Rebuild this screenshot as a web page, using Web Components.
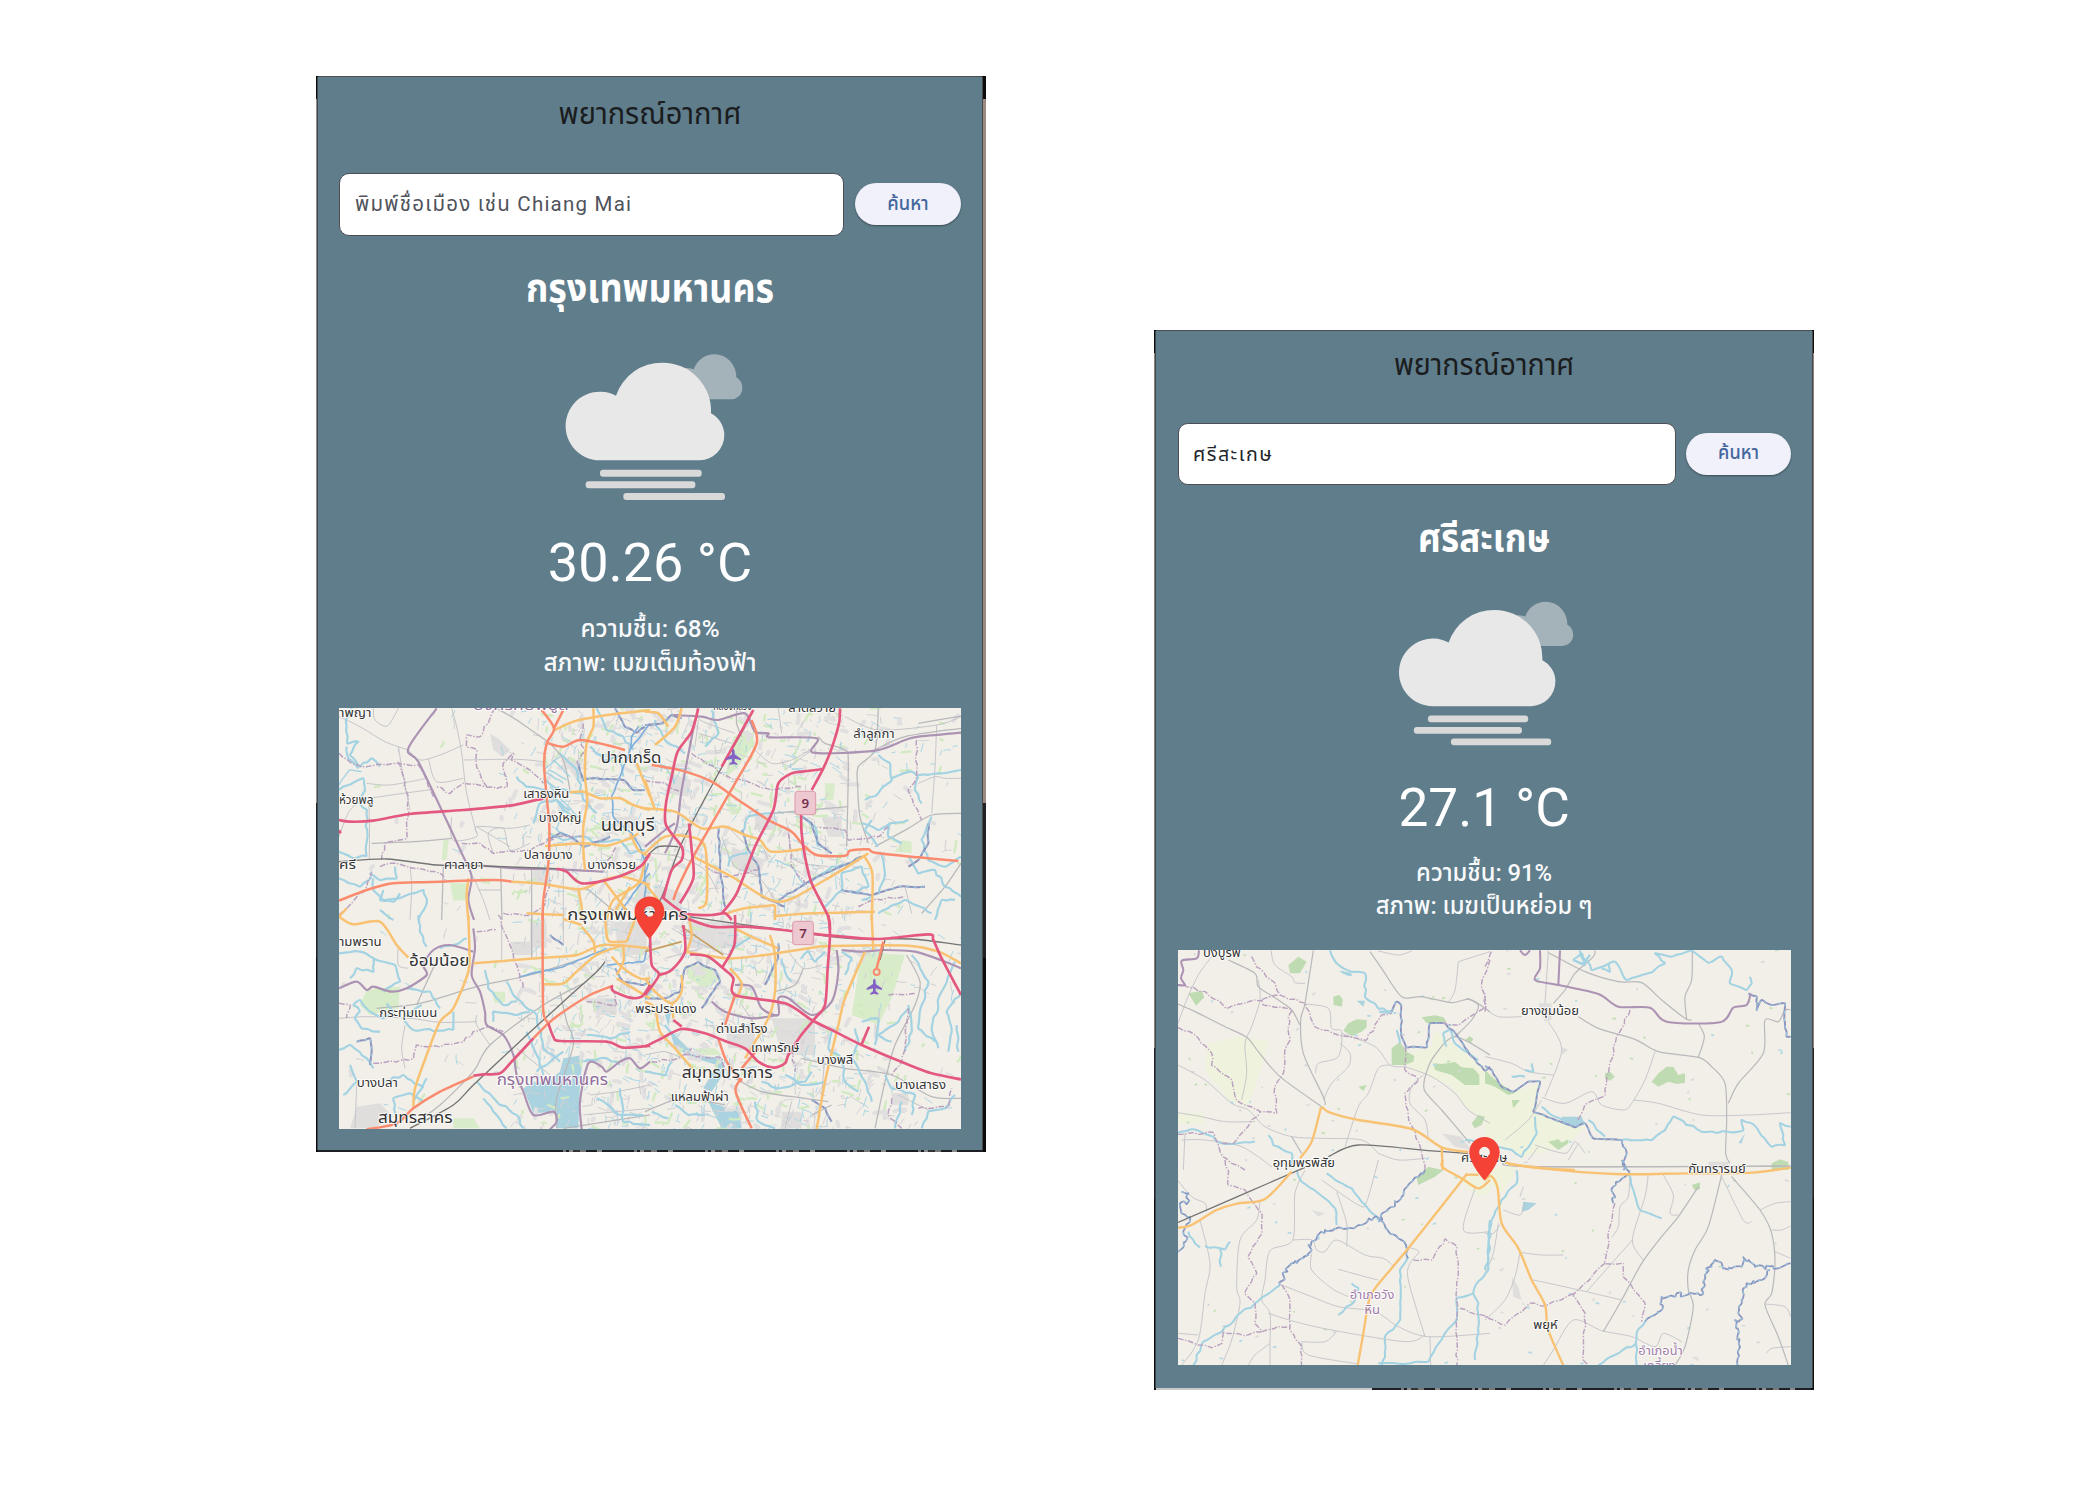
<!DOCTYPE html>
<html lang="th">
<head>
<meta charset="utf-8">
<title>พยากรณ์อากาศ</title>
<style>
body{margin:0;width:2100px;height:1500px;background:#fff;overflow:hidden;font-family:Roboto,"Noto Sans Thai","Noto Sans",sans-serif}
</style>
</head>
<body>
<weather-board>
  <weather-phone style="--u:1;--x:316px;--y:76px;--top:96.5px;--title:21px;--edge:#9a8a81;--brk:67.6%;--h:1076px;--w:670px;--pl:21.5px;--pr:4px;--cut:#1d1f24" heading="พยากรณ์อากาศ">
    <search-row slot="search" hint value="พิมพ์ชื่อเมือง เช่น Chiang Mai" action="ค้นหา" w="276"></search-row>
    <weather-report slot="report" city="กรุงเทพมหานคร" cityw="248" temp="30.26 °C" humidity="ความชื้น: 68%" humw="139" sky="สภาพ: เมฆเต็มท้องฟ้า" skyw="213" bars="0" clouds="0"></weather-report>
    <city-map slot="map" place="bangkok"></city-map>
  </weather-phone>
  <weather-phone style="--u:.9855;--x:1154px;--y:330px;--top:93px;--title:17.5px;--edge:#8d8078;--brk:67.7%;--h:1060px;--w:660px;--pl:22.5px;--pr:2.5px;--cut:#c9c9cc" heading="พยากรณ์อากาศ">
    <search-row slot="search" value="ศรีสะเกษ" action="ค้นหา" w="80"></search-row>
    <weather-report slot="report" city="ศรีสะเกษ" cityw="134" temp="27.1 °C" humidity="ความชื้น: 91%" humw="138" sky="สภาพ: เมฆเป็นหย่อม ๆ" skyw="220" bars="-20" clouds="-5"></weather-report>
    <city-map slot="map" place="sisaket"></city-map>
  </weather-phone>
</weather-board>
<script>
const line = (cls, h, text, size, w, extra='') =>
  `<svg class="${cls}" height="${h}" viewBox="0 0 400 ${h}"><text x="200" y="${h/2+size*.3415}" text-anchor="middle" font-size="${size}" ${w?`textLength="${w}" lengthAdjust="spacingAndGlyphs"`:''} ${extra}>${text}</text></svg>`;

customElements.define('weather-board', class extends HTMLElement{
  constructor(){super();this.attachShadow({mode:'open'}).innerHTML=`<style>:host{display:block;position:relative;width:2100px;height:1500px}</style><slot></slot>`}
});

customElements.define('weather-phone', class extends HTMLElement{
  connectedCallback(){
    this.attachShadow({mode:'open'}).innerHTML=`<style>
    :host{position:absolute;left:var(--x);top:var(--y);width:var(--w);height:var(--h);display:flex;box-sizing:border-box;padding:1px var(--pr) 2px 1.5px;
      background:linear-gradient(#0c0c0e 0 23px,var(--edge) 23px var(--brk),#202226 var(--brk) 82%,#0b0b0d 82%)}
    main{flex:1;background:#607d8b;display:flex;flex-direction:column;box-sizing:border-box;padding:0 calc(21px*var(--u)) 0 calc(var(--pl)*var(--u));box-shadow:-1px 0 #3c4a52, 0 -1px #4b4f50, 1px 0 #4a4a4a}
    header{height:calc(var(--top) - 1px);box-sizing:border-box;padding-top:var(--title);display:flex;justify-content:center}
    header svg{height:calc(32px*var(--u))}
    text{fill:#1a1c1e}
    .cut{position:absolute;left:2px;right:3px;bottom:0;height:2px;background:linear-gradient(90deg,var(--cut) 0 33%,transparent 33%),repeating-linear-gradient(90deg,#1d1f24 0 32px,#77787c 32px 35px,#1d1f24 35px 38px,#8a8a8e 38px 42px,#333 42px 49px,#777 49px 55px,#1d1f24 55px 66px,#888 66px 71px)}
    </style><main><header>${line('t',32,this.getAttribute('heading'),30,183)}</header><slot name="search"></slot><slot name="report"></slot><slot name="map"></slot></main><div class="cut"></div>`;
  }
});

customElements.define('search-row', class extends HTMLElement{
  connectedCallback(){
    const hint=this.hasAttribute('hint');
    this.attachShadow({mode:'open'}).innerHTML=`<style>
    :host{display:flex;align-items:center;gap:calc(11px*var(--u));height:calc(63px*var(--u));flex:none}
    .field{flex:1;height:100%;box-sizing:border-box;background:#fff;border:1.5px solid #4c4d55;border-radius:calc(10px*var(--u));display:flex;align-items:center;padding-left:calc(15px*var(--u))}
    .btn{width:calc(106px*var(--u));height:calc(42.5px*var(--u));border-radius:30px;background:#f1f1fb;box-shadow:0 1px 2px #0006;display:flex;align-items:center;justify-content:center}
    svg{display:block;overflow:visible;height:calc(30px*var(--u))}
    .field text{fill:${hint?'#50535b':'#222428'}} .btn text{fill:#43679c;font-weight:500}
    </style><div class="field"><svg viewBox="0 0 300 30"><text x="0" y="22" font-size="${hint?20.5:20}" textLength="${this.getAttribute('w')}" lengthAdjust="spacing">${this.getAttribute('value')}</text></svg></div>
    <div class="btn"><svg viewBox="0 0 60 30"><text x="30" y="20.5" text-anchor="middle" font-size="19.4" textLength="41.5" lengthAdjust="spacingAndGlyphs">${this.getAttribute('action')}</text></svg></div>`;
  }
});

customElements.define('weather-report', class extends HTMLElement{
  connectedCallback(){
    const a=n=>this.getAttribute(n);
    this.attachShadow({mode:'open'}).innerHTML=`<style>
    :host{display:flex;flex-direction:column;align-items:center;flex:none;padding:calc(28.5px*var(--u)) 0 calc(28px*var(--u))}
    svg{display:block;flex:none;overflow:visible;width:calc(400px*var(--u))}
    text{fill:#fff}
    .city{height:calc(50px*var(--u));font-weight:700}.temp{height:calc(64px*var(--u));margin-bottom:calc(17px*var(--u))}
    .info{height:calc(34px*var(--u));font-weight:500}.info text{fill:#f8fafc}
    .sky{height:calc(216.5px*var(--u));width:calc(300px*var(--u))}
    </style>
    ${line('city',50,a('city'),39.5,a('cityw'))}
    <svg class="sky" viewBox="-1 -17 900 649.5">
      <g transform="translate(${a('clouds')})">
      <path fill="#a4b2b9" d="M510 239H690A34 34 0 0 0 726 205A38 38 0 0 0 708 173A65 68 0 0 0 643 104A66 66 0 0 0 580 149Q555 140 530 150Z"/>
      <path fill="#e8e8e8" d="M299 422A103 103 0 1 1 347 228A145 145 0 0 1 487 129A145 145 0 0 1 632 281A76 76 0 0 1 672 346A76 76 0 0 1 598 422Z"/></g>
      <g transform="translate(${a('bars')})" fill="#d9d9da"><rect x="299" y="450" width="305" height="21" rx="9"/><rect x="256" y="485" width="329" height="21" rx="9"/><rect x="369" y="520" width="305" height="21" rx="9"/></g>
    </svg>
    ${line('temp',64,a('temp'),54,0)}
    ${line('info',34,a('humidity'),24.3,a('humw'))}
    ${line('info',34,a('sky'),24.3,a('skyw'))}`;
  }
});

/* Kinds of map line: colour, width, dash, wiggle amplitude */
const KIND={
  M:['#e4587f',8],T:['#fa8b6e',7.5],P:['#f8c272',7.5],S:['#b9b9bb',3.8],G:['#c2c2c6',2.8],R:['#747474',4],
  B:['#ac93b3',6.5],D:['#b9a1bf',4.5,'17 5 4 5',2.5],W:['#a3d3e2',6.5,'',2.5],w:['#a3d3e2',4,'',1.5],V:['#8794bf',5.5,'',5],X:['#8b93bd',6,'',1.5],U:['#7fb0dc',5,'',1.5],Y:['#c79f62',5]
};
function rng(s){return()=>{s=(s*1664525+1013904223)>>>0;return s/4294967296}}
function trace(pts,amp,rnd){
  let p=pts.trim().split(/\s+/).map(q=>q.split(',').map(Number));
  if(amp){const o=[p[0]];for(let i=1;i<p.length;i++){const[a,b]=p[i-1],[c,d]=p[i],l=Math.hypot(c-a,d-b),n=Math.max(1,Math.round(l/(amp>4?9:16)));
    for(let k=1;k<=n;k++){const t=k/n,z=k===n?0:1;o.push([a+(c-a)*t+z*(rnd()-.5)*amp*2.6,b+(d-b)*t+z*(rnd()-.5)*amp*2.6])}}p=o}
  let d=`M${p[0]}`;
  for(let i=0;i<p.length-1;i++){const a=p[i-1]||p[i],b=p[i],c=p[i+1],e=p[i+2]||c,k=7;
    d+=`C${[b[0]+(c[0]-a[0])/k,b[1]+(c[1]-a[1])/k,c[0]-(e[0]-b[0])/k,c[1]-(e[1]-b[1])/k,c[0],c[1]].map(v=>v.toFixed(1))}`}
  return d;
}
const LAYERS={
bangkok:{off:[[-9,-8],[306,-8],[-9,207],[306,207]],size:[622,421],scatter:1,
lines:[`
G 27,50 90,80 165,125 235,150
G 130,25 135,60 172,78 205,25
G 365,25 380,80 395,160 410,280 440,400
G 205,140 220,230 240,330
G 235,150 270,180 330,165 400,135
G 295,175 320,245 400,235
G 118,475 118,350 110,300 60,330 27,410
G 110,250 180,255 290,235
G 115,295 220,280 310,268
G 400,180 560,178 640,185
S 125,430 250,425 365,415
G 365,350 368,420 440,410 440,380 540,385 600,375
G 440,380 540,440
G 490,460 475,400 520,385 540,450 600,430
S 500,25 560,60 660,130
S 660,130 700,180 720,270
S 512,500 516,660
G 445,570 512,570
S 340,500 335,660
G 240,500 245,560 240,660
S 605,505 605,660
G 430,530 460,600 480,660
G 700,500 700,660
W 65,25 48,60 52,130 85,125 60,165 90,200 125,175 150,200
W 85,205 55,175 50,140
w 27,255 60,210 95,215
W 27,270 100,235 105,270 90,310 110,330 110,470
W 27,455 70,475 110,468
W 118,520 150,540 200,535 195,500
W 130,535 130,570 160,600 220,590 280,570 290,610 265,660
W 160,570 150,600 190,605 210,580
W 27,535 90,560 125,530
W 150,630 190,660
W 560,230 590,260 660,275 700,330 740,360
W 640,235 670,260 720,275 760,280
W 660,400 700,420 760,410 800,430
W 610,370 630,310 680,300 720,330
W 690,160 740,210 760,300 800,340
W 800,25 830,90 880,110 910,150
W 780,140 820,180 870,170 880,230
w 690,170 640,210 700,250
w 660,260 760,370
w 700,320 680,390 740,420
w 670,180 720,230
w 655,210 710,240
W 790,430 870,420 900,460 945,450
X 855,25 885,80 920,98 945,80
X 745,190 760,240 800,235 880,240 910,270 945,270
X 650,420 690,400 720,410 760,440 840,410
U 960,70 900,150 870,230 845,290 850,350 870,370 905,400 930,440 945,490 945,660
U 900,150 905,110 925,80
U 860,650 910,580 960,520
D 495,25 450,110 410,105 410,140 440,150 440,200 470,260 400,250 360,280 320,260
D 470,262 530,262 520,190 550,160 545,180 610,220 640,250
D 27,160 65,190 110,200 200,190 265,195 290,240 310,290
D 205,185 235,290 230,415 165,430 155,480
D 150,500 200,490 250,505 330,520 345,540
D 27,645 110,560 125,515
D 395,430 450,430 490,460 600,450 680,410 760,410
D 760,70 750,120 765,150 740,190
D 520,640 600,645 640,620 660,540
D 820,510 860,440
B 320,25 235,145 265,185 335,330 400,470 425,530 415,600 432,660
B 455,497 560,505 690,508 820,515
P 670,92 730,65 790,52 870,40 960,30
P 790,25 790,80 770,130 765,230 772,300 760,380 760,450 765,510
P 720,277 760,275 810,295 870,295 910,315 960,330
P 920,190 960,290
P 645,438 760,430 830,437 900,415 925,400
P 900,400 925,450 960,470
P 545,545 640,552 750,568 820,540 880,530 960,555
P 415,535 410,590 415,660
P 745,568 755,620 755,660
P 820,540 880,620 900,660
P 945,480 925,550 850,600 830,660
P 590,640 700,645
P 27,650 50,625
P 845,650 900,560
Y 820,540 890,630
R 27,485 170,477 320,495 460,498 680,506
S 770,565 860,640
T 27,602 110,570 190,550 300,546 490,540 545,545
T 635,30 672,85 650,130 642,190 650,290 658,380 655,490 640,600 638,660
T 672,85 700,30
T 655,130 700,140 750,120 830,135 885,150
M 27,360 60,365 130,362 240,342 400,330 540,317 610,302 640,296
M 680,506 710,515 755,550 850,535 930,500 960,460
M 27,390 32,400`,
`G 155,25 165,60 270,100
G 160,60 150,140
S 275,25 275,70 290,110
G 160,100 260,130
G 330,150 380,190 440,180 510,140
G 420,210 500,150
G 400,25 410,100
S 520,110 540,130 600,150 610,190 605,440
S 700,25 690,150 640,200 638,260 645,350 670,430
G 600,50 700,90 875,75 948,50
S 690,150 780,110 948,85
S 820,70 948,48
G 875,75 870,200 860,340
S 690,440 790,385 860,345 948,340
S 948,490 900,560 830,640
G 948,235 900,235 870,230 820,250
S 380,340 610,320
G 250,380 300,430 350,440 370,480
G 230,410 270,500 340,530 390,600
G 20,460 100,470 180,510 220,580
G 430,380 450,480 550,500
G 780,560 800,640 
W 700,165 735,190 740,240 700,280 660,300
W 740,235 800,215 820,230
W 820,230 810,270 830,310
W 650,370 700,390 735,370 790,360
W 735,370 730,410 770,430
W 680,360 660,390 700,440
W 860,350 830,420 850,480 900,500 948,470
W 790,470 820,520 870,510 900,560 948,590
W 710,460 720,520 700,580 650,600
W 540,620 590,570 590,520 650,500 670,560 620,580
W 490,550 560,500 620,490 650,470
W 470,350 510,380 520,440
W 820,225 880,220 948,210
W 870,660 890,600 930,600
W 700,640 780,600 860,640
W 30,60 60,120 120,160
W 200,30 220,100 180,140
W 250,500 260,470 310,460
W 290,400 310,350 380,340
w 20,180 60,200 90,250
w 390,480 440,500 480,560
X 0,75 50,70 80,45 110,55
X 470,350 500,370 520,430 560,460
X 850,370 850,430 820,480 790,500
X 590,570 680,585 760,560 840,560
X 220,380 225,500 240,620
X 290,390 310,450 340,500 350,590 420,620
D 140,160 250,230 320,250 380,270 470,260
D 815,120 815,230 790,270 830,360
D 730,380 700,410 610,420 600,390 520,380
D 0,240 60,250 110,280
D 640,620 680,600 780,590
D 430,400 440,500 490,560
D 180,500 240,530 340,510
B 85,45 170,50 220,60 300,40 330,95 370,100 375,112 515,115 505,158 690,152 780,120 820,110 948,98
B 150,60 110,270 95,380 60,460
B 0,440 60,390 90,370
P 110,25 90,80 30,135
P 0,35 40,40 70,80
P 0,325 90,335 170,385 240,380 300,405 345,420 380,455 490,445
P 0,460 60,410 130,410 180,440 185,600 160,625
P 145,470 260,530 400,605 540,540 670,460
P 655,465 682,520 680,660
P 245,640 300,625 390,615
P 390,615 390,660
P 390,648 500,640 690,635
P 0,240 30,330
P 0,550 40,600
X 400,600 500,540 650,470
U 0,520 10,490
T 20,195 110,212 200,245 280,300 370,360 440,395 470,430 515,465 600,467 615,452 670,448 690,458 820,472 940,483
T 320,60 335,130 270,250 150,460 100,560 85,600
M 160,25 140,95 98,155 80,230 63,310 63,375 110,440 110,480 80,510 55,595
R 300,80 215,230 110,430 55,580 40,610
M 325,30 230,200
R 0,475 40,440 100,440
M 132,370 140,450 145,535 105,610
M 585,25 582,70 560,145 535,205 500,270
M 535,207 470,215 440,220 400,250 385,330 330,440 275,580 230,640
M 468,340 470,400 480,470 500,550 550,650 555,690
M 50,590 120,640 200,645 240,640 260,660`,
`G 205,90 205,150 235,160
S 355,120 320,140 260,270
G 27,310 110,305 240,310 330,322 440,320
S 140,280 270,265 440,215 600,180 760,130
S 760,205 640,270 480,390 430,470 330,570 260,620
G 515,20 515,140
S 605,0 605,130
G 700,0 700,90
G 225,330 215,400 225,460
G 75,640 80,510
G 480,390 440,330 440,300
S 690,230 710,320 730,390 680,550 680,640
G 780,540 860,530 960,510
G 760,600 960,580
S 700,640 960,600
G 560,400 660,480
W 27,115 90,110 130,130 130,170 80,160 60,190
W 130,130 195,150 210,200 160,230
W 90,290 70,270 90,255 120,290 160,310 190,290 170,265
W 90,290 75,310 95,340 150,350
W 27,405 60,390 110,430 130,460
W 60,450 80,500 40,540
W 265,0 270,50 290,95
W 200,620 190,550 240,535 280,560
W 290,490 250,560
W 160,500 220,480 280,520
W 230,220 300,230 330,280
W 275,270 220,310 250,345 370,345
W 370,290 370,345
W 465,165 475,220 520,270 560,260
W 490,320 490,290 560,300 600,290
W 530,200 550,240 620,300 640,400 690,440
W 590,350 620,420 640,480
W 440,500 500,560 560,600 580,640
W 530,640 500,600 460,550
W 770,360 840,370 900,350
W 760,440 830,430 870,450
W 700,410 620,470
W 800,550 870,600 940,600
W 870,520 880,620 960,630
W 330,100 370,90 410,70
X 855,160 880,200 940,210 960,200
X 80,380 120,370 125,400 120,450
U 570,185 700,155 830,100
U 830,150 940,140 960,80
D 27,265 60,270 50,310
D 130,445 200,440 250,430 260,390 330,395 400,380 430,350 480,335 520,350
D 505,0 560,150 580,220
D 440,50 500,45
D 770,260 860,270 850,230
X 660,60 700,90
B 27,220 80,200 110,225 130,215 185,230 230,220 290,180 280,150 310,105 360,90 430,110
B 430,40 435,100 425,180 450,230 465,290 470,330 520,360 550,420 560,480 580,530 610,600 670,590 680,620 660,643
B 755,643 750,560 775,445 815,455 830,470 870,440 900,430 930,460 960,440
P 27,5 70,28 150,20 200,90 235,128
P 415,0 418,100 415,170 370,280 330,320 290,420 255,520 250,580
P 430,145 620,130 740,120 820,90 960,100
P 755,35 790,80 795,115
P 825,0 830,60 840,80 890,80
P 640,208 700,205 740,170 800,120 880,90
P 845,125 880,160 930,190 960,190
P 880,90 880,140 860,180
P 700,12 755,30
P 920,0 890,80
P 860,190 960,250
R 825,140 800,170 700,260 580,370 430,510 370,570 240,640
T 638,0 638,120 640,290 655,325
T 850,212 780,240 700,290 655,325 610,370
T 430,485 330,530 250,580 200,625 110,643
M 430,482 460,478 510,475 545,440 610,370
M 655,325 670,365 690,378 830,380 880,398 960,392
M 845,212 850,228 900,248 935,245 960,210`,
`G 80,40 150,80 250,120
G 60,130 170,100
G 430,110 475,160 530,150
S 475,160 450,210 390,230
S 470,430 600,460 740,480 860,545 948,550
S 785,120 825,200 810,270 750,390 720,500 690,640
G 290,270 330,330 350,380
S 270,490 350,530 480,550 550,560
S 560,570 500,600
G 760,540 860,590 
G 0,420 60,410 110,430
S 0,590 110,550 240,570
G 440,560 420,640
G 540,420 530,540
W 470,130 490,110 510,140 540,110
W 0,250 20,225
W 410,130 420,170 440,200
W 800,120 850,200 830,270 820,340 870,380
W 780,410 800,350 790,270
W 880,400 860,340 890,230 930,140
W 910,410 920,350 905,290 948,230
W 940,410 935,330
W 740,380 700,360 760,320 790,280
W 600,180 620,130 590,110
W 560,350 550,400 590,430 600,500 640,530
W 620,430 660,500 680,560
W 650,320 700,310 690,390
W 620,430 640,380 630,340
W 720,480 740,520 810,540 800,600
W 830,640 850,590 900,580 930,540
W 350,500 400,520 480,500 500,470
W 420,480 470,510 540,500
W 0,470 60,480 80,440
W 20,590 70,610
W 90,570 130,600 180,600
W 330,560 340,620 390,640
W 60,330 90,370
W 255,110 320,60
W 750,640 770,560
X 500,555 540,580 560,620
X 400,130 370,190 360,210
X 0,250 60,250 105,230 120,160 160,142 210,165 225,200 190,250 170,280
D 730,240 810,235
D 790,280 780,400 770,440 740,480
D 740,550 730,600 770,640
D 820,580 910,575 920,520
D 440,400 450,470
D 20,440 100,430 140,400 
D 120,420 230,430 240,470
B 575,105 580,170 560,260 500,300 430,250 400,250 400,300 350,280 320,215 270,210
B 200,260 240,290 320,310 400,300
B 590,105 650,110 720,105 810,110 900,140 948,160
X 400,85 400,130
P 0,190 30,230 80,265 110,230 110,180
P 130,0 140,60 125,110
P 270,40 330,70 400,100
P 120,110 250,130 360,120 500,98 560,93 790,92 880,110 948,145
P 375,60 390,120 390,230 370,310 300,430
P 255,160 290,205 275,250
P 680,0 685,105
P 660,110 600,250 580,330 540,500 515,643
P 0,260 30,280 45,350 90,400 150,470
P 80,265 85,310
Y 110,35 235,120
Y 0,110 110,80
T 270,240 240,330
T 220,370 245,440 290,500
T 290,460 340,400
T 290,490 272,530 320,640
M 0,395 50,370 110,342 180,355 240,378 300,400 340,440 385,458 420,445 430,420 465,365 510,310 540,270 548,160 555,60 550,0
M 15,60 20,150 42,180 0,240
M 42,180 80,165 120,110 115,30
M 135,118 190,125 240,165 265,190 270,240 420,265 500,315 570,350 650,390 780,445 860,475 948,493
M 270,0 268,90 230,160
M 100,0 200,35 300,35 440,48 560,62 700,72 850,58 865,75 890,130 948,240
M 650,388 672,335
M 85,315 110,335
R 130,5 290,28 420,45 520,60 640,72 800,72 948,90
R 720,75 705,135
T 715,80 695,160`],
water:['','','M580 520L610 500L650 500L690 470L700 430L760 420L750 500L745 640L680 640L680 590L610 595Z','M60 300L80 280L70 340L110 380L150 420L230 430L240 470L200 530L175 520L215 450L150 430L90 400ZM190 560L280 590L290 640L230 640Z'],
green:['M360 550H408L410 600L370 602Z M340 420H356L350 480H335Z M450 530l30 8v16l-25-4z','M265 110L310 90L330 130L280 200L240 235ZM240 310l30 0 15 30-25 5zM540 250h30l-5 50h-25zM770 420l30 5v35l-50-5z','M110 225L210 215L205 280L120 300L90 270ZM485 230h40v30l-30 5zM370 610l60 0 20 30h-80z','M650 110L780 120L740 250L700 330L620 300ZM120 150L180 150L230 190L180 220L130 190ZM150 400h60l20 20h-60z'],
grey:['M480 100l30 20 30 30-20 20-30-20z M700 180h60l-20 60z M850 350h60v30h-50z M930 520h30v110h-50z M610 505h50v50h-50z','M530 350h60v60h-40z M80 220l60 20-10 50-70-10z M30 550l80 30v50h-90z M260 440l100 40-20 50-80-30z M330 340l70 10-10 40h-60z','M80 575l70-10 40 40-60 35h-70z M540 80h70v40h-60z M600 20h50v80h-50z M780 250h80v50h-60z M850 20h100v100h-80z','M380 310h130v110h-100z M240 330l90 10v60h-80z M740 535h50v35h-50z M210 580h80v60h-60z M130 20h150v80h-150z M410 590h60v50h-60z'],
labels:[
[27,124,51,'าพญา',38],[430,716,31,'องครักษ์พิบูล',38,'#8f6f9b'],[812,994,188,'ปากเกร็ด',50],[27,130,312,'ห้วยพลู',38],[580,718,295,'เสาธงหิน',38],[626,754,367,'บางใหญ่',38],[812,974,394,'นนทบุรี',52],[581,728,477,'ปลายบาง',38],[342,460,508,'ศาลายา',38],[772,918,507,'บางกรวย',38],[27,78,508,'ศรี',38],[712,1074,660,'กรุงเทพมหานคร',50],
[1150,1266,30,'คลองหลวง',38],[1375,1518,36,'ลาดสวาย',38],[1570,1694,114,'ลำลูกกา',38],
[27,155,738,'ามพราน',38],[237,418,799,'อ้อมน้อย',50],[148,322,950,'กระทุ่มแบน',38],[80,204,1160,'บางปลา',38],[144,368,1268,'สมุทรสาคร',50],[500,834,1155,'กรุงเทพมหานคร',46,'#8f6c9a'],[916,1100,940,'พระประแดง',38],[1158,1313,1000,'ด่านสำโรง',38],[1263,1408,1057,'เทพารักษ์',38],[1460,1570,1092,'บางพลี',38],[1055,1328,1134,'สมุทรปราการ',50],[1022,1196,1203,'แหลมฟ้าผ่า',38],[1695,1848,1168,'บางเสาธง',38]],
pin:[310.5,231,2.13]},
sisaket:{off:[[-33,-10],[307,-10],[-33,210],[307,210]],size:[613,415],scatter:0,
lines:[`
S 99,192 150,215 240,260 305,292 340,335 405,410 530,500
G 200,50 160,105 125,180 99,250
G 340,120 345,180 320,260 300,310 305,400 290,480
S 250,60 330,100 340,140 400,180 440,210 465,255
S 505,31 480,190 467,240 475,340 535,470 540,495
G 378,31 390,75 440,110 450,128 480,130
G 480,192 550,205 560,265 590,275 580,350 520,370 512,400
G 585,310 615,340 610,380 560,430 535,480
G 590,280 690,320 735,375 780,380
G 780,380 860,410 930,460 970,510 1035,550
S 675,35 710,85 770,170 830,170 920,188 975,178 1035,215
G 700,33 760,45 800,33
G 940,65 930,150 910,188
G 940,65 1035,35
S 1035,345 930,290 870,345 845,395 838,450 890,510 975,610
S 930,290 980,240 1000,195 965,175
G 735,375 700,385 670,460 640,500 600,620
G 835,405 800,440 795,490 840,540 850,600
G 99,375 180,420 260,490 310,510 360,560 440,590 530,595 650,600 700,640
G 99,518 170,530 240,545 330,545
S 440,590 470,640
G 110,600 180,600 290,620 380,680
G 120,580 115,690
G 700,640 760,660 840,655
B 162,31 155,55 110,62 115,90 108,115 120,135 99,135
W 555,31 575,70 620,95 660,100 660,170 700,205 740,215
X 740,215 755,185 768,195 770,290 785,322 845,322 855,250 900,250 935,285 975,345 1020,392 1035,380
W 99,578 140,568 190,585 230,610 280,610 330,605
W 370,585 385,615 440,640 440,680
W 905,320 895,280 915,270 930,310 1000,360
W 755,270 765,310
W 590,95 620,105
W 960,600 1035,610
D 320,50 335,80 390,130 405,165 350,180 355,195 440,210 430,230 435,300 420,330 415,400 390,440 395,520 345,515
D 405,165 480,190 510,260 580,285 665,300 710,225 740,220
D 115,135 180,155 245,205 330,180 355,180
D 99,262 150,285 200,340 200,375 260,420 275,480 345,515 300,570 265,610 225,610
D 99,583 205,578 235,650 300,690
D 1035,60 1010,130 1022,200 940,255 880,250
D 780,320 780,390 820,420 780,460 790,530 830,640 840,690
P 530,500 555,518 640,540 800,567 890,622 970,636
P 528,502 500,605 465,655
P 890,622 893,690
R 550,650 640,615 850,632 970,640`,
`G 190,31 180,190
S 190,38 300,95 400,125 470,128 530,180 600,235 620,240
S 330,31 325,50 270,100 240,150 205,190
S 622,31 620,120 600,170 605,240
G 0,205 40,230 110,230
S 280,230 340,265 450,298 520,335 640,352 680,380 720,430 725,540 722,640 735,670
S 640,250 658,290 640,352
G 190,245 230,330 180,470
S 730,490 760,430 835,340 840,240 880,245 900,210 917,210
G 510,335 480,420 440,490 415,510 350,495 320,455 240,490 170,472
G 445,480 520,490 650,525 790,525 917,518
G 0,350 80,370 130,395 205,405
G 170,480 130,540 60,600
G 150,615 240,640 270,605 300,640
G 130,660 160,620
G 280,610 250,660
W 285,31 300,75 265,60 290,40 320,90 390,65 425,120 490,100 540,70 510,40 560,50 620,31
W 350,85 375,95 370,70
W 620,31 670,68 710,50 740,90 735,130 785,150 800,130 795,110
W 265,60 300,70 315,45
X 0,378 20,390 50,440 85,455 130,425 165,425 145,515 200,535 270,562 300,550 325,595 410,600
W 310,540 360,590
W 410,600 500,600 540,570 565,530 650,575 740,577 775,570 770,540 800,550 860,620 900,615 885,550 917,560
W 170,500 210,530 235,540
W 150,530 155,580 110,650 80,630 30,620
W 80,410 120,410
W 140,370 145,395 120,390
V 410,600 425,640 415,690
X 790,160 815,170 815,210 830,180 860,195 900,190 900,250 905,290 917,290
B 165,31 165,85 150,120 220,135 340,162 400,200 495,203 545,245 705,247 745,203 785,195 797,160
B 225,31 220,135
B 105,31 120,45 135,31
D 435,210 395,290 370,400 360,465 300,495 275,545
D 0,80 20,31
D 0,215 0,160
S 60,660 160,680 917,678
P 70,672 180,685 270,690`,
`G 99,62 140,110 180,130 185,155
G 165,180 195,310 180,400 160,540 110,616
G 345,120 335,180 285,240 275,380 285,430 260,540 230,616
G 480,31 450,100 443,240 375,272 360,360 350,420 375,460 375,550 375,616
G 443,240 500,240 515,270 540,275 575,240 660,285 715,295 745,318
G 500,280 500,330 560,385 610,410 
G 580,328 660,350 700,360
G 410,375 500,410 580,440 690,455 760,500 850,530 1035,520
G 370,460 450,485 560,510 780,545 840,525
G 375,550 330,585 310,616
G 470,545 540,545 575,515
G 470,545 490,585 640,612
G 575,95 605,190 605,260
G 530,60 640,135 665,125 700,0
G 790,262 822,275 795,310 790,360 840,530
G 855,530 857,616
G 990,85 955,210 1035,215
G 99,520 160,525
W 455,31 470,65 520,100 570,145 575,195
W 545,40 580,65 620,85 660,135 700,180
W 130,215 150,250 165,262
W 180,258 240,268 255,245
W 225,265 228,320
W 1035,180 1030,330 990,380 985,400 1000,430 1000,520 990,600
W 985,400 935,415 935,480 900,520 850,605 780,612 700,610
W 790,290 765,330 765,480 720,530 720,590 710,616
W 620,370 640,385 630,420 580,465
W 405,375 330,430 285,460 230,515 175,545 145,616
V 405,375 430,320 490,285 500,245 540,210 600,205 650,195 690,170 760,235 790,265 788,295
V 700,185 770,110 800,65 840,30
V 110,95 130,100 130,125 105,130 110,160 135,180 115,215 125,240 99,275
D 240,0 250,31 250,75 300,90 350,160 350,220 310,290 335,340 300,400 330,430 330,490 350,515 300,527 230,515
D 350,515 400,500 435,500
D 99,535 160,555 200,563 230,550 235,510
D 410,375 435,420 435,510 470,560 470,616
D 805,300 860,300 900,237 935,260 940,340 935,420 935,616
D 945,445 1035,475
R 99,187 300,100 480,22
P 99,203 140,195 215,150 280,130 360,117 440,35
P 893,0 893,22 950,55 1000,85 1035,60
P 1000,45 965,45 950,62 790,265 690,385 670,430 655,520 638,616`,
`G 0,220 25,220 45,195
G 40,190 25,280 0,340
G 105,278 90,350 60,420 0,480
G 110,278 170,285 235,285
G 55,150 105,165 120,130
G 105,110 115,80
G 145,360 260,385 410,420
G 490,40 480,110 442,240 475,300
G 442,240 305,395
G 435,31 430,110 405,140 400,200 380,232
S 640,80 580,170 530,230 470,310 410,420 355,515
G 535,45 565,105 555,160 580,165
S 710,45 670,200 630,270 610,330 610,390 625,440 600,560 570,616
G 710,50 775,180 800,185
S 740,50 825,150 860,220 870,310 860,400 840,435 880,530 910,616
G 825,150 870,130 917,125
G 860,210 890,210 917,198
G 870,275 917,295
G 840,432 900,440 917,470
G 845,580 860,565 917,560
G 175,616 205,570 265,480 350,512 440,530 510,560 535,520 590,545
W 95,31 95,70 50,120 20,180 10,220 10,290 0,330
W 430,40 445,90 465,150 530,175
V 410,0 430,42 385,80 385,130
V 480,485 530,450 530,410 620,400 655,400 660,345 690,300 720,325 770,320 775,292 810,320 880,325 917,310
V 855,330 830,360 785,370 770,420 765,480 750,480 765,560 760,616
W 480,485 455,520 455,616
W 455,550 400,580 340,616
D 390,130 375,200 360,310 415,310 415,350 480,430 470,485
D 360,310 300,370 265,405 300,460 295,600 310,616
D 265,400 180,437 135,430 60,495 0,470
S 60,5 130,20 917,18
P 60,8 140,22 390,42 600,40 800,38 917,23
P 0,60 18,48 38,85 50,190 100,265 140,360 180,435 187,500 210,560 235,616`],
water:['M700 212L745 210L740 222L705 220ZM635 182l25 0-5 18zM580 92l40 6-10 10z','M230 530H290L300 552L265 562L230 548ZM780 580l-20 30 10 0z','','M115 125L155 130L130 150L110 155Z'],
green:['M740 325L765 305L785 335L808 348L805 365L780 375L740 375ZM595 272L610 250L635 238L665 240L665 262L650 275L620 288ZM565 170l18-6 10 14-2 22-25-5zM430 75l30-25 25 15-20 35-30 0zM130 160l40-8 8 20-25 25zM865 370L890 372L930 366L950 382L985 385L1003 405L1003 435L960 435L920 405L870 390ZM830 232l40-6 25 6 10 13-60 5zM640 440l25-5-10 18zM960 300l15-12 10 10-8 12zM980 550l20-25 20 5-10 25-20 10z','M500 425L520 400L545 380L565 380L580 405L600 400L600 428L575 432L550 425L520 440ZM360 400l15-5 15 15-15 12-15-5zM0 390L25 415L60 440L90 460L70 465L30 440L0 430ZM80 480l25 0-20 25zM190 605l30-7 10 10 20-10 0 12-30 20zM860 670l25-12 25 8v24h-50z','M815 55L850 20L895 31L870 50L820 75Z','M620 75l25-8 0 20-15 5z'],
pale:['M870 270L920 310L1035 400L1035 560L970 510L920 440L790 380L790 340L860 320ZM190 310L280 290L370 305L350 380L310 500L250 480L180 390Z M99 520h80v30h-80z','M0 390L85 455L165 430L145 510L200 535L300 560L240 620L110 650L40 610L0 590Z','M955 50L1035 20V100L1000 110L960 80Z','M0 31L90 10L85 50L50 100L0 60Z'],
grey:['M890 580l60 10 30 40-50-10z M500 160l15-5-10 15z M480 495l20-5-10 10z','M160 190h40v50l-20 5zM230 320l20 10-20 15z M670 665h60v20h-60z M300 445l25 10z','M500 150l40 10-20 10zM380 130h12v8z','M80 350l20 30 10 40-25-10zM620 590h20v15z M60 320l-20 10 10 5z'],
labels:[[174,287,50,'บึงบูรพ์',38],[1128,1302,224,'ยางชุมน้อย',38],[383,570,682,'อุทุมพรพิสัย',38],[948,1087,666,'ศรีสะเกษ',38],[1630,1802,698,'กันทรารมย์',38],[614,748,1076,'อำเภอวัง',38,'#a07ba9'],[658,705,1121,'หิน',38,'#a07ba9'],[1165,1238,1168,'พยุห์',38],[1480,1613,1246,'อำเภอน้ำ',38,'#a07ba9'],[1495,1592,1290,'เกลี้ยง',38,'#a07ba9']],
pin:[306.5,230.5,2.17]}
};
customElements.define('city-map', class extends HTMLElement{
  connectedCallback(){
    const d=LAYERS[this.getAttribute('place')],[W,H]=d.size,rnd=rng(7),tr=i=>`transform="translate(${d.off[i]}) scale(.33333)"`;
    const area=(set,fill)=>set?set.map((p,i)=>p?`<path ${tr(i)} d="${p}" fill="${fill}"/>`:'').join(''):'';
    let fine='';
    if(d.scatter){
      const cols=['#d0d0d3','#d0d0d3','#d6d4d7','#aad6e5','#aad6e5','#d2eac2','#e1dfdf'];
      for(let i=0;i<2600;i++){
        const edge=rnd()<.2,x=edge?rnd()*W:190+rnd()*330+(rnd()-.5)*100,y=rnd()*H,c=cols[Math.floor(rnd()*7)],l=2+rnd()*9,t=(rnd()<.5?.25:1.8)+(rnd()-.5)*.9;
        if(x<175&&rnd()<.7)continue;
        const dx=Math.cos(t)*l,dy=Math.sin(t)*l,bx=dx*.5+(rnd()-.5)*3,by=dy*.5+(rnd()-.5)*3;
        fine+=`<path d="M${x.toFixed(1)} ${y.toFixed(1)}q${bx.toFixed(1)} ${by.toFixed(1)} ${dx.toFixed(1)} ${dy.toFixed(1)}" stroke="${c}" stroke-width="${c==='#e1dfdf'?4:c==='#d2eac2'?2.4:1}"/>`;
      }
    } else for(let i=0;i<150;i++){
      const x=rnd()*W,y=rnd()*H,c=['#c4e0b6','#d9d9da','#b3dae5'][i%3];
      fine+=`<path d="M${x.toFixed(1)} ${y.toFixed(1)}l${(rnd()*2.5).toFixed(1)} ${(rnd()*2-1).toFixed(1)}" stroke="${c}" stroke-width="1.8"/>`;
    }
    const order='GSWwUXVDBRYPTM',buckets={};
    d.lines.forEach((q,i)=>q.trim().split('\n').forEach(s=>{const k=s[0],[c,w,dash,amp]=KIND[k];
      const p=trace(s.slice(2),amp,rnd);
      (buckets[k]=buckets[k]||[]).push(`<path ${tr(i)} d="${p}" stroke="${c}" stroke-width="${d.scatter?w:w*.95}" ${dash?`stroke-dasharray="${dash}"`:''}/>`+(k==='V'||k==='X'?`<path ${tr(i)} d="${p}" stroke="#9dcfe2" stroke-width="3" stroke-dasharray="10 12"/>`:''))}));
    const roads=[...order].map(k=>(buckets[k]||[]).join('')).join('');
    const labels=d.labels.map(([a,b,y,t,s,c='#333'])=>`<text x="${a}" y="${y}" font-size="${s}" textLength="${b-a}" lengthAdjust="spacingAndGlyphs" fill="${c}">${t}</text>`).join('');
    const shield=(x,y,t)=>`<g transform="translate(${x} ${y})"><rect width="62" height="70" rx="8" fill="#edc8d1" stroke="#dc9aaa" stroke-width="3"/><text class="sh" x="31" y="49" font-size="40" text-anchor="middle">${t}</text></g>`;
    const plane=(x,y)=>`<path transform="translate(${x} ${y})" fill="#8461c4" d="M0-24Q4-24 4-15V-8L23 5V10L4 5V14L12 20V24L0 21L-12 24V20L-4 14V5L-23 10V5L-4-8V-15Q-4-24 0-24Z"/>`;
    const extra=d.scatter?shield(1395,274,'9')+shield(1388,664,'7')+plane(1210,171)+plane(1633,860)+'<circle cx="1640" cy="816" r="9" fill="none" stroke="#f98a6f" stroke-width="6"/>':'';
    const[px,py,ps]=d.pin;
    this.attachShadow({mode:'open'}).innerHTML=`<style>:host{display:block;flex:none;width:${W}px;height:${H}px;margin:0 -2px 0 0;overflow:hidden;background:#f2efe9}
      svg{display:block;font-family:"Noto Sans Thai","Noto Sans",sans-serif}
      text{paint-order:stroke;stroke:#fffc;stroke-width:6px;stroke-linejoin:round}.sh{stroke:none;fill:#75304c;font-weight:600}</style>
      <svg width="${W}" height="${H}" viewBox="0 0 ${W} ${H}">
      ${area(d.pale,'#eff2dc')}${area(d.grey,'#e0dedd')}${area(d.green,d.scatter?'#d9ecca':'#bfdbb1')}${area(d.water,'#aad3df')}
      <g fill="none" stroke-linecap="round">${fine}</g><g fill="none" stroke-linejoin="round">${roads}</g>
      <g transform="translate(${d.off[0]}) scale(.33333)">${extra}${labels}</g>
      <path transform="translate(${px-12*ps} ${py-22*ps}) scale(${ps})" fill="#f44336" d="M12 2C8.13 2 5 5.13 5 9c0 5.25 7 13 7 13s7-7.75 7-13c0-3.87-3.13-7-7-7zm0 9.5a2.5 2.5 0 0 1 0-5 2.5 2.5 0 0 1 0 5z"/></svg>`;
  }
});
</script>
</body>
</html>
